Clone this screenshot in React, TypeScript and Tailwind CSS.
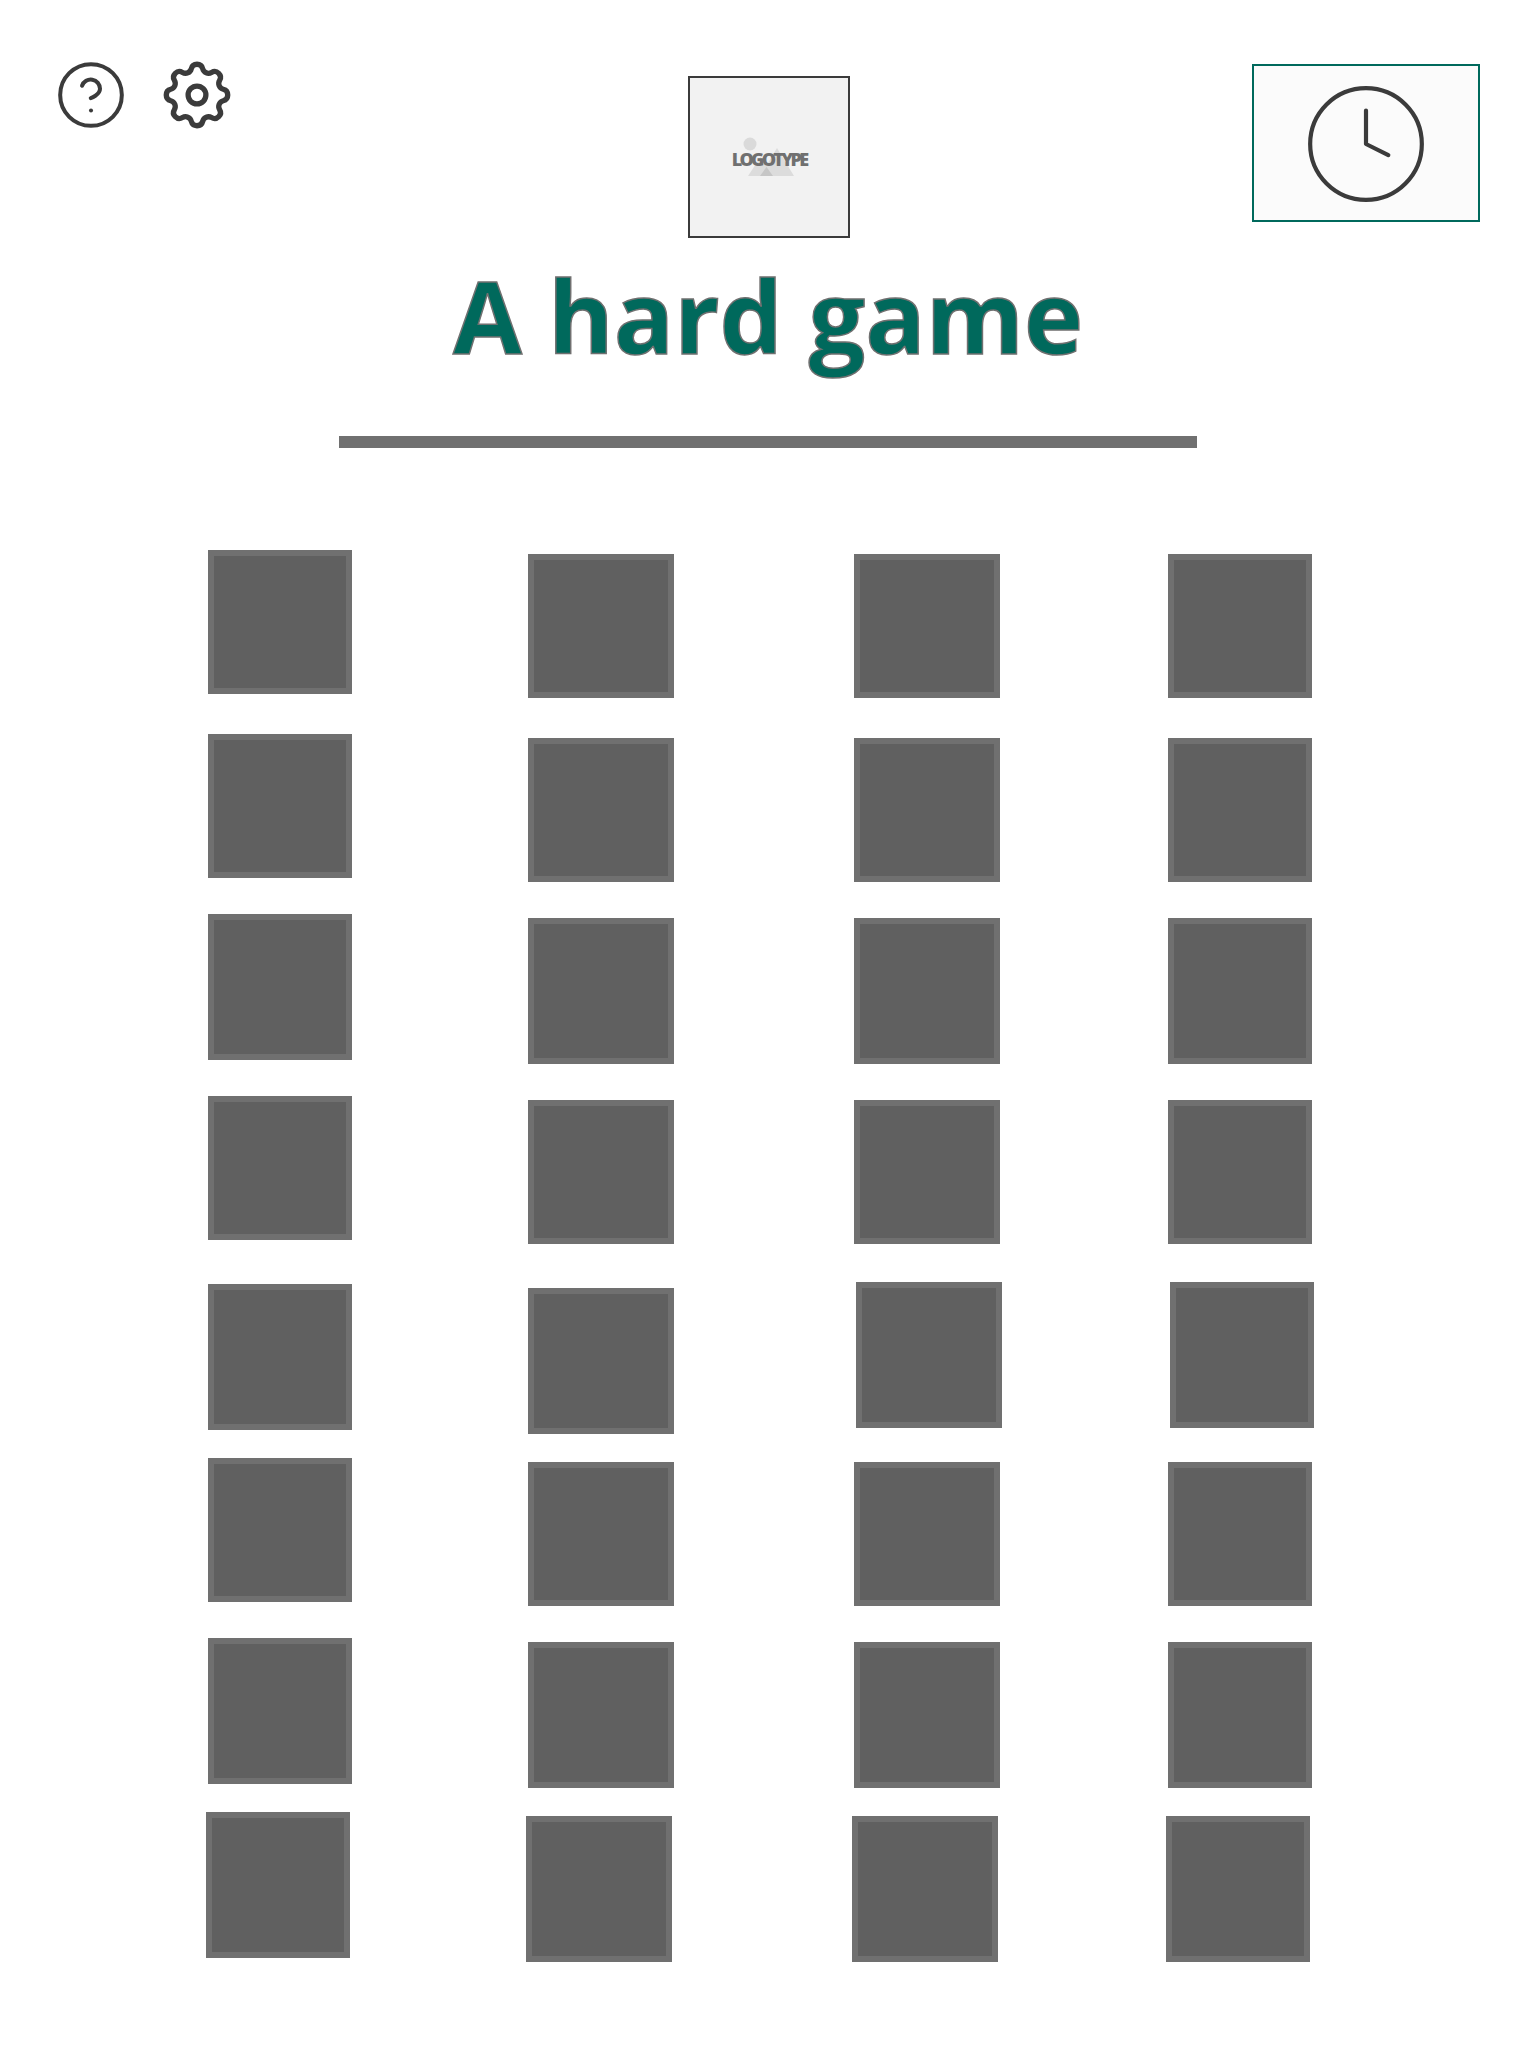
import React from "react";
import { Clock } from "lucide-react";

const base = "box-border shrink-0 border-[6px] border-[#707070] bg-[#606060]";

const col1 = [
  "w-[144px] h-[144px]",
  "w-[144px] h-[144px] mt-[40px]",
  "w-[144px] h-[146px] mt-[36px]",
  "w-[144px] h-[144px] mt-[36px]",
  "w-[144px] h-[146px] mt-[44px]",
  "w-[144px] h-[144px] mt-[28px]",
  "w-[144px] h-[146px] mt-[36px]",
  "w-[144px] h-[146px] mt-[28px] -ml-[2px]",
];
const col2 = [
  "w-[146px] h-[144px]",
  "w-[146px] h-[144px] mt-[40px]",
  "w-[146px] h-[146px] mt-[36px]",
  "w-[146px] h-[144px] mt-[36px]",
  "w-[146px] h-[146px] mt-[44px]",
  "w-[146px] h-[144px] mt-[28px]",
  "w-[146px] h-[146px] mt-[36px]",
  "w-[146px] h-[146px] mt-[28px] -ml-[2px]",
];
const col3 = [
  "w-[146px] h-[144px]",
  "w-[146px] h-[144px] mt-[40px]",
  "w-[146px] h-[146px] mt-[36px]",
  "w-[146px] h-[144px] mt-[36px]",
  "w-[146px] h-[146px] mt-[38px] ml-[2px]",
  "w-[146px] h-[144px] mt-[34px]",
  "w-[146px] h-[146px] mt-[36px]",
  "w-[146px] h-[146px] mt-[28px] -ml-[2px]",
];
const col4 = [
  "w-[144px] h-[144px]",
  "w-[144px] h-[144px] mt-[40px]",
  "w-[144px] h-[146px] mt-[36px]",
  "w-[144px] h-[144px] mt-[36px]",
  "w-[144px] h-[146px] mt-[38px] ml-[2px]",
  "w-[144px] h-[144px] mt-[34px]",
  "w-[144px] h-[146px] mt-[36px]",
  "w-[144px] h-[146px] mt-[28px] -ml-[2px]",
];

function Column({ cards, className }: { cards: string[]; className: string }) {
  return (
    <div className={`flex flex-col ${className}`}>
      {cards.map((c, i) => (
        <div key={i} className={`${base} ${c}`} />
      ))}
    </div>
  );
}

function HelpIcon() {
  return (
    <svg width="74" height="74" viewBox="0 0 24 24" fill="none" stroke="#3b3b3b" strokeWidth="1.3" strokeLinecap="round" strokeLinejoin="round">
      <circle cx="12" cy="12" r="10" />
      <path d="M9.09 9a3 3 0 0 1 5.83 1c0 2-3 3-3 3" />
      <path d="M12 17h.01" />
    </svg>
  );
}

function GearIcon() {
  return (
    <svg width="82" height="82" viewBox="0 0 24 24" fill="none" stroke="#3b3b3b" strokeWidth="1.55" strokeLinecap="round" strokeLinejoin="round">
      <path d="M10.325 4.317c.426-1.756 2.924-1.756 3.35 0a1.724 1.724 0 0 0 2.573 1.066c1.543-.94 3.31.826 2.37 2.37a1.724 1.724 0 0 0 1.065 2.572c1.756.426 1.756 2.924 0 3.35a1.724 1.724 0 0 0-1.066 2.573c.94 1.543-.826 3.31-2.37 2.37a1.724 1.724 0 0 0-2.572 1.065c-.426 1.756-2.924 1.756-3.35 0a1.724 1.724 0 0 0-2.573-1.066c-1.543.94-3.31-.826-2.37-2.37a1.724 1.724 0 0 0-1.065-2.572c-1.756-.426-1.756-2.924 0-3.35a1.724 1.724 0 0 0 1.066-2.573c-.94-1.543.826-3.31 2.37-2.37c1 .608 2.296.07 2.572-1.065z" />
      <circle cx="12" cy="12" r="2.6" />
    </svg>
  );
}

function Logo() {
  return (
    <div className="relative box-border w-[162px] h-[162px] border-2 border-[#3b3b3b] bg-[#f2f2f2] flex items-center justify-center">
      <svg className="absolute left-[48px] top-[56px]" width="70" height="50" viewBox="0 0 70 50">
        <circle cx="12" cy="10" r="6.5" fill="#dadada" />
        <polygon points="10,42 22.5,23 35,42" fill="#dcdcdc" />
        <polygon points="22,42 39,14 56,42" fill="#dcdcdc" />
        <polygon points="22,42 28.5,33 35,42" fill="#c6c6c6" />
      </svg>
      <span className="relative mt-[3px] font-['Open_Sans',sans-serif] font-extrabold text-[18px] leading-none tracking-[-2.7px] text-[#707070]">
        LOGOTYPE
      </span>
    </div>
  );
}

export default function App() {
  return (
    <div className="w-[1536px] h-[2048px] bg-white overflow-hidden">
      <header className="flex items-start h-[238px]">
        <div className="flex items-center mt-[53px] ml-[54px] h-[84px] gap-[28px]">
          <HelpIcon />
          <GearIcon />
        </div>
        <div className="mt-[76px] ml-[450px]">
          <Logo />
        </div>
        <div className="mt-[64px] ml-[402px] box-border w-[228px] h-[158px] pt-[2px] border-2 border-[#00695c] bg-[#fbfbfb] flex items-center justify-center">
          <Clock size={134} strokeWidth={0.75} color="#3b3b3b" />
        </div>
      </header>

      <h1 className="h-[120px] mt-[17px] text-center font-['Open_Sans',sans-serif] font-bold text-[100px] leading-[120px] text-[#00695c] [-webkit-text-stroke:1.5px_#707070]">
        A hard game
      </h1>

      <div className="mx-auto mt-[61px] w-[858px] h-[12px] bg-[#707070]" />

      <section className="flex items-start mt-[102px] ml-[208px]">
        <Column cards={col1} className="w-[144px]" />
        <Column cards={col2} className="w-[146px] ml-[176px] mt-[4px]" />
        <Column cards={col3} className="w-[146px] ml-[180px] mt-[4px]" />
        <Column cards={col4} className="w-[144px] ml-[168px] mt-[4px]" />
      </section>
    </div>
  );
}
